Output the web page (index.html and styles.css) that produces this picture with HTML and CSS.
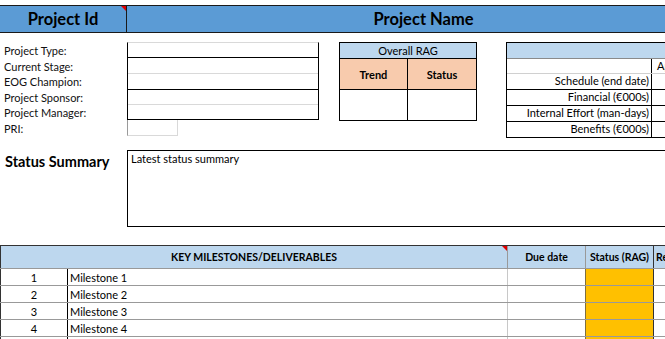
FILE: index.html
```html
<!DOCTYPE html>
<html lang="en">
<head>
<meta charset="utf-8">
<title>Project Status Report</title>
<link rel="stylesheet" href="styles.css">
</head>
<body>
<div class="page">
  <div class="header">
    <div class="hcell hid flagged">Project Id</div>
    <div class="hcell hname">Project Name</div>
  </div>

  <div class="info">
    <div class="labels">
      <div class="lbl">Project Type:</div>
      <div class="lbl">Current Stage:</div>
      <div class="lbl">EOG Champion:</div>
      <div class="lbl">Project Sponsor:</div>
      <div class="lbl">Project Manager:</div>
      <div class="lbl">PRI:</div>
    </div>
    <div class="fields">
      <div class="fieldbox">
        <div class="field f1"></div>
        <div class="field f2"></div>
        <div class="field f3"></div>
        <div class="field f4"></div>
        <div class="field f5"></div>
      </div>
      <div class="pri"></div>
    </div>
    <div class="rag">
      <div class="rag-title">Overall RAG</div>
      <div class="rag-row rag-head">
        <div class="rag-cell">Trend</div>
        <div class="rag-cell">Status</div>
      </div>
      <div class="rag-row rag-body">
        <div class="rag-cell"></div>
        <div class="rag-cell"></div>
      </div>
    </div>
    <div class="dims">
      <div class="dims-head"></div>
      <div class="drow light"><div class="dlabel"></div><div class="dval">Approved</div></div>
      <div class="drow"><div class="dlabel">Schedule (end date)</div><div class="dval"></div></div>
      <div class="drow"><div class="dlabel">Financial (€000s)</div><div class="dval"></div></div>
      <div class="drow"><div class="dlabel">Internal Effort (man-days)</div><div class="dval"></div></div>
      <div class="drow"><div class="dlabel">Benefits (€000s)</div><div class="dval"></div></div>
    </div>
  </div>

  <div class="status">
    <div class="status-label">Status Summary</div>
    <div class="status-box">Latest status summary</div>
  </div>

  <table class="ms">
    <colgroup>
      <col class="c-num"><col class="c-name"><col class="c-due"><col class="c-rag"><col class="c-resp">
    </colgroup>
    <thead>
      <tr>
        <th colspan="2" class="flagged">KEY MILESTONES/DELIVERABLES</th>
        <th>Due date</th>
        <th class="th-rag">Status (RAG)</th>
        <th class="th-resp">Responsible</th>
      </tr>
    </thead>
    <tbody>
      <tr><td class="num">1</td><td class="name">Milestone 1</td><td></td><td class="amber"></td><td></td></tr>
      <tr><td class="num">2</td><td class="name">Milestone 2</td><td></td><td class="amber"></td><td></td></tr>
      <tr><td class="num">3</td><td class="name">Milestone 3</td><td></td><td class="amber"></td><td></td></tr>
      <tr><td class="num">4</td><td class="name">Milestone 4</td><td></td><td class="amber"></td><td></td></tr>
      <tr><td class="num">5</td><td class="name">Milestone 5</td><td></td><td class="amber"></td><td></td></tr>
    </tbody>
  </table>
</div>
</body>
</html>
```
FILE: styles.css
```css
html, body {
  margin: 0;
  padding: 0;
  overflow: hidden;
  background: #fff;
}
body {
  font-family: Lato, "Liberation Sans", sans-serif;
  color: #000;
  font-size: 11px;
}
.page {
  width: 760px;
  padding-top: 5px;
}

/* header band */
.header {
  display: flex;
  height: 26px;
  background: #5b9bd5;
  border-top: 1px solid #1a1a1a;
  border-bottom: 1px solid #1a1a1a;
}
.hcell {
  display: flex;
  align-items: center;
  justify-content: center;
  font-weight: 700;
  font-size: 16.5px;
}
.hid {
  width: 127px;
  border-right: 1px solid #1a1a1a;
  box-sizing: border-box;
}
.hname {
  width: 593px;
}
.flagged {
  position: relative;
}
.flagged::after {
  content: "";
  position: absolute;
  top: 0;
  right: 0;
  border-style: solid;
  border-width: 0 5px 5px 0;
  border-color: transparent #e00000 transparent transparent;
}

/* info block */
.info {
  display: flex;
  align-items: flex-start;
  margin-top: 9px;
}
.labels {
  width: 127px;
  padding-top: 1px;
  flex: none;
}
.lbl {
  height: 15.5px;
  line-height: 15.5px;
  padding-left: 4px;
  white-space: nowrap;
  color: #111;
}
.fields {
  width: 192px;
  flex: none;
}
.fieldbox {
  border: 1px solid #000;
  border-top-color: #d9d9d9;
}
.field {
  box-sizing: border-box;
  border-bottom: 1px solid #d9d9d9;
}
.f1 { height: 15px; border-bottom-color: #000; }
.f2 { height: 16px; }
.f3 { height: 16px; border-bottom-color: #000; }
.f4 { height: 15px; }
.f5 { height: 14px; border-bottom: none; }
.pri {
  width: 51px;
  height: 16px;
  box-sizing: border-box;
  border-left: 1px solid #9a9a9a;
  border-right: 1px solid #d9d9d9;
  border-bottom: 1px solid #d9d9d9;
}

.rag {
  flex: none;
  width: 138px;
  margin-left: 20px;
  border: 1px solid #000;
  box-sizing: border-box;
}
.rag-title {
  height: 15px;
  line-height: 15px;
  background: #bdd7ee;
  text-align: center;
  border-bottom: 1px solid #000;
}
.rag-row {
  display: grid;
  grid-template-columns: 68px 1fr;
}
.rag-head {
  height: 30px;
  background: #f8cbad;
  border-bottom: 1px solid #000;
  font-weight: 700;
}
.rag-body {
  height: 30px;
}
.rag-cell {
  display: flex;
  align-items: center;
  justify-content: center;
}
.rag-cell:first-child {
  border-right: 1px solid #000;
}

.dims {
  flex: none;
  width: 230px;
  margin-left: 29px;
  border-left: 1px solid #000;
  border-top: 1px solid #000;
}
.dims-head {
  height: 15px;
  background: #bdd7ee;
  border-bottom: 1px solid #8a8a8a;
}
.drow {
  display: flex;
  height: 16px;
  box-sizing: border-box;
  border-bottom: 1px solid #000;
}
.drow.light {
  height: 15px;
  border-bottom-color: #d0d0d0;
}
.dlabel {
  width: 145px;
  flex: none;
  text-align: right;
  padding-right: 2px;
  box-sizing: border-box;
  border-right: 1px solid #000;
  line-height: 14px;
  white-space: nowrap;
}
.dval {
  padding-left: 5px;
  line-height: 13px;
  white-space: nowrap;
}

/* status summary */
.status {
  display: flex;
  margin-top: 12px;
}
.status-label {
  width: 127px;
  flex: none;
  box-sizing: border-box;
  padding: 3px 0 0 5px;
  font-size: 14.5px;
  font-weight: 700;
}
.status-box {
  width: 600px;
  height: 77px;
  box-sizing: border-box;
  border: 1px solid #000;
  padding: 1px 3px;
  font-size: 11px;
}

/* milestones table */
.ms {
  margin-top: 18px;
  border-collapse: collapse;
  table-layout: fixed;
  width: 760px;
}
.c-num { width: 67px; }
.c-name { width: 440px; }
.c-due { width: 78px; }
.c-rag { width: 68px; }
.c-resp { width: 107px; }
.ms th {
  height: 22px;
  background: #bdd7ee;
  font-weight: 700;
  font-size: 10.5px;
  border-top: 1px solid #333;
  border-left: 1px solid #999;
  border-bottom: 1px solid #999;
  text-align: center;
  padding: 0;
  white-space: nowrap;
  overflow: hidden;
}
.ms th:first-child {
  border-left-color: #333;
}
.ms th.th-rag {
  border-right: 1px solid #333;
}
.ms th.th-resp {
  text-align: left;
  padding-left: 2px;
}
.ms td {
  height: 16px;
  padding: 0;
  border-bottom: 1px solid #999;
  border-left: 1px solid #c8c8c8;
}
.ms td.num {
  text-align: center;
  border-left: 1px solid #333;
}
.ms td.name {
  padding-left: 2px;
  border-left: 1px solid #000;
}
.ms td.amber {
  background: #ffc000;
  border-left: 1px solid #7f6f3f;
  border-right: 1px solid #333;
}
```
